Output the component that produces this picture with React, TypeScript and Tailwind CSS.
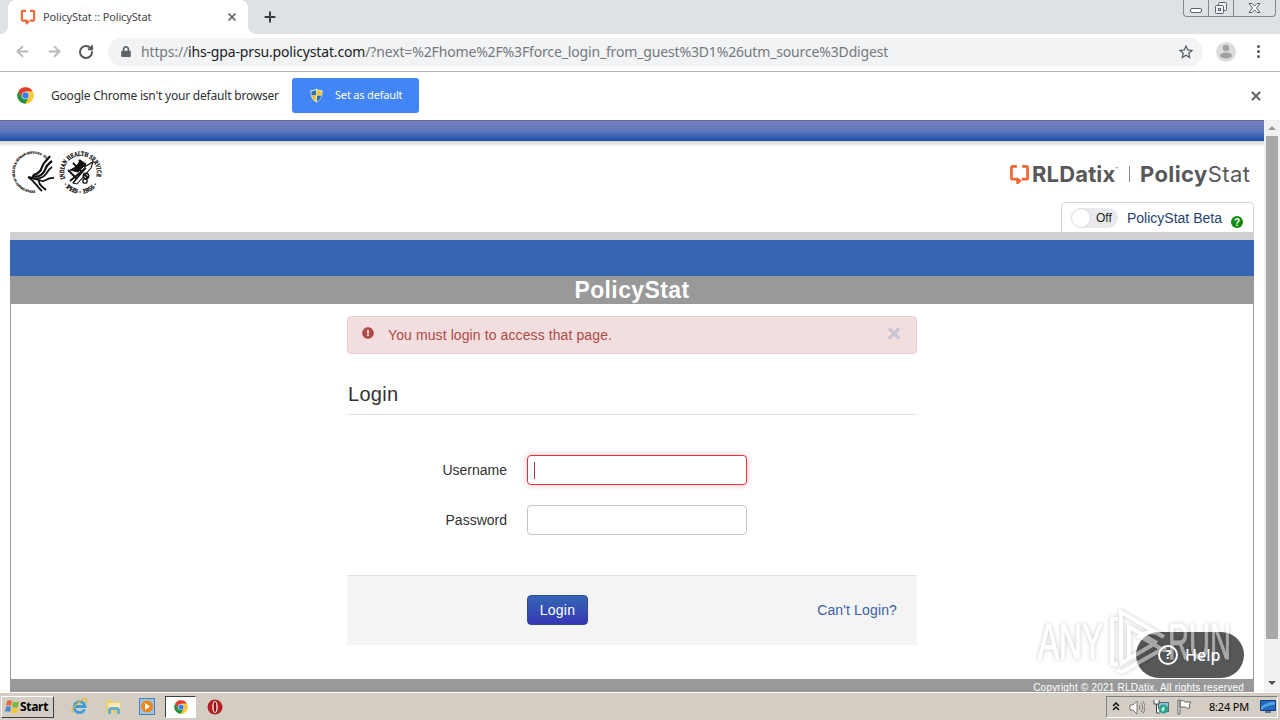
import React from 'react';
import { ArrowLeft, ArrowRight, Plus, RotateCw, X } from 'lucide-react';
import { FaExclamationCircle, FaLock, FaTimes } from 'react-icons/fa';
import { MdStarBorder } from 'react-icons/md';

const ChromeLogo: React.FC<{ className?: string }> = ({ className }) => (
  <svg viewBox="0 0 48 48" className={className}>
    <circle cx="24" cy="24" r="23" fill="#fcc934" />
    <path d="M4 12.5A23 23 0 0 1 44 12.5H24L14 29.8Z" fill="#e33b2e" />
    <path d="M4 12.5A23 23 0 0 0 24 47L34 29.8H14Z" fill="#229342" />
    <path d="M44 12.5A23 23 0 0 1 24 47L34 29.8 24 12.5Z" fill="#fcc934" />
    <circle cx="24" cy="24" r="10.5" fill="#fff" />
    <circle cx="24" cy="24" r="9" fill="#3b7ded" />
  </svg>
);

const BracketLogo: React.FC<{ className?: string }> = ({ className }) => (
  <svg viewBox="0 0 20 20" className={className} fill="none" stroke="#ee6a35" strokeWidth="2.6" strokeLinejoin="round">
    <path d="M7.5 2.3H3.500q-1.200 0-1.200 1.200v9.800q0 1.200 1.200 1.200H8.200v3.500l3-3" />
    <path d="M12.500 2.300h4q1.200 0 1.200 1.200v9.800q0 1.200-1.200 1.200h-4.300" />
  </svg>
);

const TabStrip: React.FC = () => (
  <div className="flex h-[34px] items-start bg-[#dee1e6]">
    <div className="w-2 h-[34px] bg-white">
      <div className="w-2 h-[34px] bg-[#dee1e6] rounded-br-lg"></div>
    </div>
    <div className="flex h-[34px] w-[240px] items-center rounded-t-lg bg-white pl-3 pr-[10px]">
      <BracketLogo className="h-4 w-4" />
      <span className="ml-[7px] flex-1 whitespace-nowrap text-[11px] tracking-[-0.14px] text-[#45484c]">PolicyStat :: PolicyStat</span>
      <X className="h-3 w-3 text-[#5f6368]" strokeWidth={3.4} />
    </div>
    <div className="w-2 h-[34px] bg-white">
      <div className="w-2 h-[34px] bg-[#dee1e6] rounded-bl-lg"></div>
    </div>
    <Plus className="ml-[6px] mt-[9px] h-4 w-4 text-[#3c4043]" strokeWidth={3} />
    <div className="flex-1"></div>
    <div className="mr-1 flex h-[17px] w-[93px] rounded-b-[4px] border border-t-0 border-[#85888e] text-[#5b606b]">
      <div className="flex w-[25px] items-end justify-center border-r border-[#85888e] pb-[3px]">
        <div className="h-[5px] w-3 rounded-[2px] border border-[#5b606b] bg-white"></div>
      </div>
      <div className="flex w-[25px] items-center justify-center border-r border-[#85888e]">
        <svg width="14" height="14" viewBox="0 0 14 14" fill="#eff0f3" stroke="#5b606b">
          <rect x="4.500" y="1.500" width="8" height="8" rx="1" />
          <rect x="1.500" y="4.500" width="8" height="8" rx="1" />
          <rect x="4.500" y="7.500" width="2" height="2" fill="#fff" />
        </svg>
      </div>
      <div className="flex flex-1 items-center justify-center">
        <svg width="13" height="12" viewBox="0 0 13 12" fill="#fff" stroke="#5b606b">
          <path d="M1 1.500h3l2.500 2.500L9 1.500h3L8.500 6l3.500 4.500H9L6.500 8 4 10.500H1L4.500 6Z" />
        </svg>
      </div>
    </div>
  </div>
);

const Toolbar: React.FC = () => (
  <div className="flex h-[38px] items-center border-b border-[#b4b6b9] bg-white pb-[2px] pl-[14px]">
    <ArrowLeft className="h-[17px] w-[17px] text-[#b6b8ba]" strokeWidth={2.600} />
    <ArrowRight className="ml-[15px] h-[17px] w-[17px] text-[#b6b8ba]" strokeWidth={2.600} />
    <RotateCw className="ml-[15px] h-4 w-4 text-[#55585c]" strokeWidth={3} />
    <div className="ml-[14px] flex h-7 w-[1095px] items-center rounded-full bg-[#f1f3f4] pl-[13px] pr-2">
      <FaLock className="h-[11px] w-[10px] text-[#5f6368]" />
      <span className="ml-[10px] whitespace-nowrap text-[14px] tracking-[-0.155px] text-[#75797e]">
        https://<span className="text-[#202124]">ihs-gpa-prsu.policystat.com</span>/?next=%2Fhome%2F%3Fforce_login_from_guest%3D1%26utm_source%3Ddigest
      </span>
      <MdStarBorder className="ml-auto h-[18px] w-[18px] text-[#55585c]" />
    </div>
    <svg className="ml-[13px] h-5 w-5" viewBox="0 0 20 20">
      <circle cx="10" cy="10" r="10" fill="#dcdcdc" />
      <circle cx="10" cy="6" r="3.200" fill="#a2a2a2" />
      <ellipse cx="10" cy="13.500" rx="6" ry="3" fill="#a2a2a2" />
    </svg>
    <div className="ml-[21px] flex flex-col gap-[2px]">
      <div className="h-[3px] w-[3px] rounded-full bg-[#55585c]"></div>
      <div className="h-[3px] w-[3px] rounded-full bg-[#55585c]"></div>
      <div className="h-[3px] w-[3px] rounded-full bg-[#55585c]"></div>
    </div>
  </div>
);

const InfoBar: React.FC = () => (
  <div className="flex h-12 items-center bg-white pb-px pl-[17px] pr-[17px]">
    <ChromeLogo className="h-[17px] w-[17px]" />
    <span className="ml-[17px] w-[241px] whitespace-nowrap text-[12px] tracking-[-0.2px] text-[#2c2f33]">Google Chrome isn't your default browser</span>
    <button className="flex h-[35px] w-[127px] items-center rounded-[3px] bg-[#4285f4] pl-[17px] text-[11px] text-white">
      <svg className="h-[15px] w-[15px]" viewBox="0 0 16 16">
        <path d="M8 .5C6 2 4 2.500 1.500 2.500c0 6 1.500 10.500 6.500 13 5-2.500 6.500-7 6.500-13C12 2.500 10 2 8 .5Z" fill="#e3ecd0" />
        <path d="M7.500 2v6H2.800C2.500 6.500 2.500 5 2.500 3.500 4.500 3.500 6 3 7.500 2ZM8.500 8h4.700c-.6 2.800-2 5-4.700 6.400Z" fill="#2b6fb8" />
        <path d="M8.500 2v6h4.700c.3-1.500.3-3 .3-4.500C11.500 3.500 10 3 8.500 2ZM7.500 8H2.800c.6 2.800 2 5 4.700 6.400Z" fill="#f2c32c" />
      </svg>
      <span className="ml-[11px] whitespace-nowrap tracking-[-0.18px]">Set as default</span>
    </button>
    <X className="ml-auto h-[14px] w-[14px] text-[#5f6368]" strokeWidth={3.400} />
  </div>
);

const AgencySeals: React.FC = () => (
  <svg width="96" height="48" viewBox="0 0 96 48" className="overflow-visible font-['Liberation_Serif',serif]">
    <defs>
      <path id="hhs" d="M23 42.500A18.500 18.500 0 1 1 35.500 12.500" />
      <path id="ihsTop" d="M53.200 30.500A16.500 16.500 0 1 1 83.800 30.500" />
      <path id="ihsBottom" d="M49.300 33A21 21 0 0 0 87.700 33" />
    </defs>
    <text fontSize="3.200" fontWeight="bold" fill="#111" stroke="#111" strokeWidth="0.2">
      <textPath href="#hhs" textLength="76" lengthAdjust="spacingAndGlyphs">DEPARTMENT OF HEALTH &amp; HUMAN SERVICES · USA</textPath>
    </text>
    <g fill="none" stroke="#111">
      <path d="M38 8c-3 5-7 6-8 11-1 4-4 7-9 8" strokeWidth="2.200" />
      <path d="M40 13c-4 3-6 5-7 9-2 4-5 8-13 6" strokeWidth="2.200" />
      <path d="M40 19c-3 2-4 4-6 7-3 4-7 6-17 3" strokeWidth="1.800" />
      <path d="M42 30c-7-1-8 4-12 3-4-1-7-2-14-4 8 5 8 9 14 14" strokeWidth="1.800" />
      <path d="M27 33c0 5 4 6 7 9" strokeWidth="1.800" />
    </g>
    <text fontSize="6.500" fontWeight="bold" fill="#111" stroke="#111" strokeWidth="0.3">
      <textPath href="#ihsTop" textLength="62" lengthAdjust="spacingAndGlyphs">INDIAN HEALTH SERVICE</textPath>
    </text>
    <text fontSize="6.500" fontWeight="bold" fill="#111" stroke="#111" strokeWidth="0.3">
      <textPath href="#ihsBottom" startOffset="4" textLength="40" lengthAdjust="spacingAndGlyphs">· PHS - 1955 ·</textPath>
    </text>
    <g fill="none" stroke="#111">
      <path d="m58 33 23-19M61 15l15 15M56 22l10 10M67 12l10 10" strokeWidth="1.900" />
      <path d="m61 35 13-17 7-4-2 6-14 16Z" fill="#fff" strokeWidth="1.100" />
      <path d="M68 12c-2 6-6 8-10 10l8 2 8-8Z" fill="#111" />
      <circle cx="74" cy="28" r="2.700" strokeWidth="1.500" />
      <circle cx="73" cy="33" r="2.200" strokeWidth="1.300" />
      <path d="m61 35 13-15" strokeWidth="1.200" />
    </g>
  </svg>
);

const PageHeader: React.FC = () => (
  <div>
    <div className="h-[21px] border-t border-[#666993] bg-linear-to-b from-[#777ec2] via-[#5d79bd] to-[#174da4]"></div>
    <div className="flex h-[91px] justify-between bg-linear-to-b from-[#d2d5ce] to-white to-[6px] pl-3 pr-[10px]">
      <div className="pt-[7px]"><AgencySeals /></div>
      <div className="flex flex-col items-end">
        <div className="mt-[19px] flex h-7 w-[245px] items-center whitespace-nowrap font-['Inter',sans-serif] text-[22px] text-[#58585a]">
          <BracketLogo className="mt-px h-[21px] w-[21px]" />
          <span className="ml-[2px] w-[83px] font-bold tracking-[0.15px]">RLDatix</span>
          <span className="mb-2 w-[6px] text-[5px]">™</span>
          <span className="ml-[8px] h-4 w-px bg-[#8a8a8c]"></span>
          <span className="ml-[10px] tracking-[0.4px]"><b>Policy</b>Stat</span>
        </div>
        <div className="mt-[14px] flex h-[30px] w-[193px] items-center rounded-t-[5px] border border-b-0 border-[#d4d4d4] bg-white pl-[9px] font-['Liberation_Sans',sans-serif]">
          <div className="flex h-5 w-[47px] items-center rounded-full bg-[#e8eaed] text-[12px] text-[#222]">
            <div className="h-5 w-5 rounded-full border border-[#d9dbdf] bg-white"></div>
            <span className="ml-[5px]">Off</span>
          </div>
          <span className="ml-[9px] mt-[2px] w-[104px] whitespace-nowrap text-[14px] text-[#273f70]">PolicyStat Beta</span>
          <span className="mt-[9px] flex h-3 w-3 items-center justify-center rounded-full bg-[#0b8a0b] text-[10px] font-bold text-white">?</span>
        </div>
      </div>
    </div>
  </div>
);

const LoginPanel: React.FC = () => (
  <div className="mx-auto w-[570px] pt-3 text-[14px] text-[#333]">
    <div className="flex h-[38px] items-center rounded-[4px] border border-[#e9cdd2] bg-[#f2dede] pl-[14px] pr-[14px] text-[#b04a48]">
      <FaExclamationCircle className="mb-1 h-3 w-3" />
      <span className="ml-[14px] flex-1 tracking-[0.1px]">You must login to access that page.</span>
      <FaTimes className="mb-[3px] h-[17px] w-4 text-[#c9c4d3]" />
    </div>
    <h1 className="mt-[25px] h-9 border-b border-[#e2e2e2] pl-px text-[20px] leading-[31px] tracking-[0.3px]">Login</h1>
    <div className="mt-10 flex h-[30px] items-center">
      <label className="mr-5 w-40 text-right">Username</label>
      <div className="flex h-[30px] w-[220px] items-center rounded-[4px] border border-[#dc3545] bg-white pl-[6px] shadow-[0_0_6px_#f8b9b7]">
        <div className="h-[17px] w-px bg-[#a33b42]"></div>
      </div>
    </div>
    <div className="mt-5 flex h-[30px] items-center">
      <label className="mr-5 w-40 text-right">Password</label>
      <div className="h-[30px] w-[220px] rounded-[4px] border border-[#c6c6c6] bg-white"></div>
    </div>
    <div className="mt-10 flex h-[70px] items-center border-t border-[#e2e2e2] bg-[#f4f4f4] pl-[180px] pr-5">
      <button className="mb-px h-[30px] w-[61px] rounded-[4px] border border-[#304a9a] bg-linear-to-b from-[#3565b3] to-[#3535b3] tracking-[0.2px] text-white">Login</button>
      <span className="ml-auto tracking-[0.14px] text-[#3a62a5]">Can't Login?</span>
    </div>
  </div>
);

const Watermark: React.FC = () => (
  <svg className="absolute left-[1030px] top-[600px]" width="215" height="80" viewBox="0 0 215 80">
    <g className="drop-shadow-[0_0_2px_rgba(0,0,0,0.45)]" opacity="0.48">
      <g fill="none" stroke="#fff" strokeWidth="4">
        <path d="M88 19h-6v45h6" />
        <path d="M91 61V12l41 24M99 58V27l28 16" />
        <path d="m87 70 5 2 44-25M90 64l34-20M107 38q8-8 20-5l7 4M111 37l24 14" />
      </g>
      <g fill="#fff" stroke="#fff" strokeWidth="1" className="font-['Liberation_Sans',sans-serif]" fontSize="50">
        <text x="8" y="59" textLength="65" lengthAdjust="spacingAndGlyphs">ANY</text>
        <text x="138" y="59" textLength="63" lengthAdjust="spacingAndGlyphs">RUN</text>
      </g>
    </g>
  </svg>
);

const Taskbar: React.FC = () => (
  <div className="flex h-[28px] items-center bg-[#d4cdc3] shadow-[inset_0_1px_0_#fff]">
    <div className="mt-[2px] flex h-[22px] w-[53px] items-center border border-b-[#404040] border-l-white border-r-[#404040] border-t-white pl-[2px] ml-px">
      <svg width="16" height="16" viewBox="0 0 16 16">
        <path d="M3 2c2-1 3-1 5 0L7 7C5 6 4 6 2 7Z" fill="#e96a36" />
        <path d="M9 2.500c2 1 4 1 6 0L14 8c-2 1-4 1-6-.5Z" fill="#79b843" />
        <path d="M2 8c2-1 3-1 5 0l-1 5c-2-1-3-1-5 0Z" fill="#4b88d5" />
        <path d="M8 8.500c2 1 4 1 6 0l-1 5c-2 1-4 1-6 0Z" fill="#f5c534" />
      </svg>
      <span className="text-[12px] font-bold tracking-[-0.3px] text-black">Start</span>
    </div>
    <svg className="ml-[17px] mt-px" width="17" height="17" viewBox="0 0 17 17" fill="none">
      <path d="M13.500 11.500A5.500 5.500 0 1 1 14 8.500H4" stroke="#3d9bdd" strokeWidth="2.800" />
      <path d="M1 15C0 11 8 2 14 1c3 0 1 3 1 4" stroke="#e5b631" strokeWidth="1.300" />
    </svg>
    <svg className="ml-[17px] mt-px" width="17" height="17" viewBox="0 0 17 17">
      <path d="M1 2h6l1 2h8v11H1Z" fill="#e9cf70" />
      <path d="M3 5h12v7H3Z" fill="#f8eab0" />
      <path d="M3 16v-5l2-2h8l2 2v5h-3v-4H6v4Z" fill="#65b0d9" />
    </svg>
    <svg className="ml-[17px] mt-px" width="16" height="17" viewBox="0 0 16 17">
      <rect x=".5" y=".5" width="15" height="16" fill="#9bc5e8" stroke="#4a80ba" />
      <circle cx="8" cy="8.500" r="6" fill="#f08519" />
      <path d="m6 5 5 3.500L6 12Z" fill="#fff" />
    </svg>
    <div className="ml-[10px] mt-[2px] flex h-[22px] w-[31px] items-center justify-center border border-b-white border-l-[#404040] border-r-white border-t-[#404040] bg-white">
      <ChromeLogo className="h-[14px] w-[14px]" />
    </div>
    <svg className="ml-[11px] mt-[2px]" width="16" height="16" viewBox="0 0 16 16">
      <circle cx="8" cy="8" r="7.500" fill="#b51e21" />
      <ellipse cx="8" cy="8" rx="2.800" ry="6" fill="#f4dcda" />
      <ellipse cx="8" cy="8" rx="1.300" ry="5" fill="#8c1013" />
    </svg>
    <div className="ml-auto mr-[2px] mt-[2px] flex h-[22px] w-[172px] items-center border border-b-white border-l-[#808080] border-r-white border-t-[#808080] pl-[5px]">
      <svg width="8" height="10" viewBox="0 0 8 10" fill="none" stroke="#111" strokeWidth="1.500">
        <path d="m1 4 3-3 3 3M1 8l3-3 3 3" />
      </svg>
      <svg className="ml-[9px]" width="16" height="15" viewBox="0 0 16 15" fill="none" stroke="#777">
        <path d="M1 5h3l4-4v13l-4-4H1Z" fill="#fff" />
        <path d="M10 5q2 2.500 0 5M12 3q3.500 4.500 0 9M14 1.500q4 6 0 12" />
      </svg>
      <svg className="ml-[8px]" width="17" height="16" viewBox="0 0 17 16">
        <path d="M5.500 3.500h10v9h-10Z" fill="#8bc4cf" stroke="#536f76" />
        <path d="M1 1v4h5V1M3.500 5v9H7" fill="#fff" stroke="#444" />
        <circle cx="10.500" cy="10" r="4.500" fill="#25a28e" />
        <path d="m8 10 3-3 1 3-2 3Z" fill="#b8e9d8" />
      </svg>
      <svg className="ml-[6px]" width="17" height="16" viewBox="0 0 17 16" fill="#fff" stroke="#666">
        <path d="M2 1v14h2V1ZM4 2c3-1 4 0 5 1h6l-2 3 1 3c-3 1-4-1-5-1H4Z" />
      </svg>
      <span className="ml-[16px] w-[51px] whitespace-nowrap text-[11px] tracking-[-0.2px] text-black">8:24 PM</span>
      <svg className="shrink-0" width="16" height="14" viewBox="0 0 16 14">
        <path d="M.5.500h15v10H.5Z" fill="#236bc5" stroke="#183e7a" />
        <path d="M1 7Q8 1 15 2v3Q8 4 1 10Z" fill="#5ba4e8" />
        <path d="M5 11h6v2H5Z" fill="#647790" />
      </svg>
    </div>
  </div>
);

const App: React.FC = () => {
  return (
    <div className="relative flex h-[720px] w-[1280px] flex-col overflow-hidden bg-white font-['Noto_Sans',sans-serif]">
      <TabStrip />
      <Toolbar />
      <InfoBar />
      <div className="flex h-[572px]">
        <div className="flex w-[1264px] flex-col font-['Liberation_Sans',sans-serif]">
          <PageHeader />
          <div className="mx-[10px]">
            <div className="h-2 bg-[#d0d0d0]"></div>
            <div className="h-9 bg-[#3565b3]"></div>
            <div className="h-7 bg-[#999] text-center text-[23px] font-bold leading-7 tracking-[0.4px] text-white">PolicyStat</div>
            <div className="h-[375px] border-x border-[#999]">
              <LoginPanel />
            </div>
            <div className="h-[13px] overflow-hidden bg-[#999] pr-[10px] pt-[3px] text-right text-[10px] leading-[12px] tracking-[0.21px] text-white">
              Copyright © 2021 RLDatix. All rights reserved
            </div>
          </div>
        </div>
        <div className="flex w-4 flex-col items-center bg-[#f1f1f1] pt-[6px] pb-[7px]">
          <div className="border-x-4 border-b-4 border-x-transparent border-b-[#999]"></div>
          <div className="mt-[6px] h-[503px] w-3 bg-[#a8a8a8]"></div>
          <div className="mt-auto border-x-4 border-t-4 border-x-transparent border-t-[#505050]"></div>
        </div>
      </div>
      <Taskbar />
      <div className="absolute left-[1136px] top-[632px] h-[46px] w-[108px] rounded-full bg-[#555759]"></div>
      <Watermark />
      <div className="absolute left-[1158px] top-[632px] flex h-[46px] items-center text-[16px] font-medium text-white">
        <span className="flex h-5 w-5 items-center justify-center rounded-full border-2 border-white text-[13px] font-bold">?</span>
        <span className="ml-[7px]">Help</span>
      </div>
    </div>
  );
};

export default App;
